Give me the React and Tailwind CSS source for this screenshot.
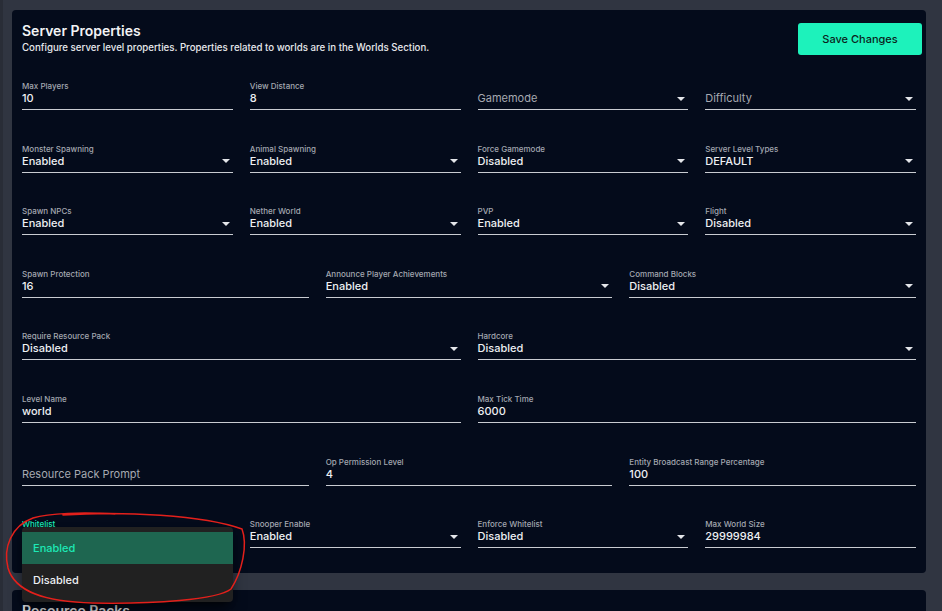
import React from 'react';

const rows = [
  {
    cols: 'grid-cols-4',
    fields: [
      { label: 'Max Players', value: '10' },
      { label: 'View Distance', value: '8' },
      { placeholder: 'Gamemode', select: true },
      { placeholder: 'Difficulty', select: true },
    ],
  },
  {
    cols: 'grid-cols-4',
    fields: [
      { label: 'Monster Spawning', value: 'Enabled', select: true },
      { label: 'Animal Spawning', value: 'Enabled', select: true },
      { label: 'Force Gamemode', value: 'Disabled', select: true },
      { label: 'Server Level Types', value: 'DEFAULT', select: true },
    ],
  },
  {
    cols: 'grid-cols-4',
    fields: [
      { label: 'Spawn NPCs', value: 'Enabled', select: true },
      { label: 'Nether World', value: 'Enabled', select: true },
      { label: 'PVP', value: 'Enabled', select: true },
      { label: 'Flight', value: 'Disabled', select: true },
    ],
  },
  {
    cols: 'grid-cols-3',
    fields: [
      { label: 'Spawn Protection', value: '16' },
      { label: 'Announce Player Achievements', value: 'Enabled', select: true },
      { label: 'Command Blocks', value: 'Disabled', select: true },
    ],
  },
  {
    cols: 'grid-cols-2',
    fields: [
      { label: 'Require Resource Pack', value: 'Disabled', select: true },
      { label: 'Hardcore', value: 'Disabled', select: true },
    ],
  },
  {
    cols: 'grid-cols-2',
    fields: [
      { label: 'Level Name', value: 'world' },
      { label: 'Max Tick Time', value: '6000' },
    ],
  },
  {
    cols: 'grid-cols-3',
    fields: [
      { placeholder: 'Resource Pack Prompt' },
      { label: 'Op Permission Level', value: '4' },
      { label: 'Entity Broadcast Range Percentage', value: '100' },
    ],
  },
  {
    cols: 'grid-cols-4',
    fields: [
      { label: 'Whitelist', value: 'Enabled', select: true, open: true },
      { label: 'Snooper Enable', value: 'Enabled', select: true },
      { label: 'Enforce Whitelist', value: 'Disabled', select: true },
      { label: 'Max World Size', value: '29999984' },
    ],
  },
];

const Arrow = () => (
  <svg width="8" height="4" viewBox="0 0 8 4" className="mr-[3px] shrink-0">
    <path d="M0 0 L8 0 L4 4 Z" fill="#e4e6ea" />
  </svg>
);

const Field = ({ field }) => {
  const active = field.open;
  return (
    <div className="relative flex flex-col">
      <div
        className={`h-[10px] text-[8px] leading-[10px] font-medium ${
          active ? 'text-[#1de9b6]' : 'text-[#a3a7b0]'
        }`}
      >
        {field.label || ''}
      </div>
      <div
        className={`flex items-center justify-between h-[19px] pb-[3px] border-b ${
          active ? 'border-[#1de9b6]' : 'border-[#c9ccd2]'
        }`}
      >
        {field.placeholder ? (
          <span className="text-[11px] leading-[15px] text-[#a6a9b1]">{field.placeholder}</span>
        ) : (
          <span className="text-[11px] leading-[15px] font-medium text-[#eef0f3]">
            {active ? '' : field.value}
          </span>
        )}
        {field.select && <Arrow />}
      </div>
      {active && (
        <div className="absolute left-0 right-0 top-[8px] z-10 rounded bg-[#212121] pt-[5px] pb-[6px] shadow-lg shadow-black/60">
          <div className="h-[32px] bg-[#1e6650] pl-[11px] text-[11px] leading-[32px] font-medium text-[#1de9b6]">
            Enabled
          </div>
          <div className="h-[32px] pl-[11px] text-[11px] leading-[32px] font-medium text-[#eef0f3]">
            Disabled
          </div>
        </div>
      )}
    </div>
  );
};

export default function App() {
  return (
    <div
      className="relative h-screen overflow-hidden bg-[#303541] pl-3 pr-4 pt-[10px] border-l-[3px] border-[#292d37]"
      style={{ fontFamily: 'Inter, "Noto Sans", sans-serif' }}
    >
      <div className="-ml-[3px] rounded bg-[#040b1b] px-[10px] pt-[11px] pb-[25px]">
        <div className="flex items-start justify-between">
          <div>
            <h1 className="text-[14px] leading-[20px] font-semibold text-[#f2f3f5]">Server Properties</h1>
            <p className="text-[9.7px] leading-[14px] font-medium text-[#e6e8ec]">
              Configure server level properties. Properties related to worlds are in the Worlds Section.
            </p>
          </div>
          <button className="mt-[2px] -mr-[6px] h-[32px] w-[124px] rounded-[3px] bg-[#1df2bb] text-[11px] font-medium text-[#0b1f1c]">
            Save Changes
          </button>
        </div>
        <div className="mt-[26px] flex flex-col gap-[33.6px]">
          {rows.map((row, i) => (
            <div key={i} className={`grid ${row.cols} gap-x-[17px]`}>
              {row.fields.map((f, j) => (
                <Field key={j} field={f} />
              ))}
            </div>
          ))}
        </div>
      </div>
      <div className="-ml-[3px] mt-[17px] rounded bg-[#040b1b] px-[10px] pt-[11px] pb-6">
        <h2 className="text-[14px] leading-[20px] font-semibold text-[#f2f3f5]">Resource Packs</h2>
      </div>
      <svg
        className="pointer-events-none absolute left-0 top-0 z-20"
        width="942"
        height="611"
        viewBox="0 0 942 611"
      >
        <path
          d="M60 515 C120 511 200 515 239 529 C245 545 239 572 228 589 C214 600 150 604 90 603 C42 602 12 592 5 568 C0 548 8 526 30 518 C46 513 80 512 112 514"
          fill="none"
          stroke="#e3201b"
          strokeWidth="1.5"
          strokeLinecap="round"
        />
      </svg>
    </div>
  );
}
